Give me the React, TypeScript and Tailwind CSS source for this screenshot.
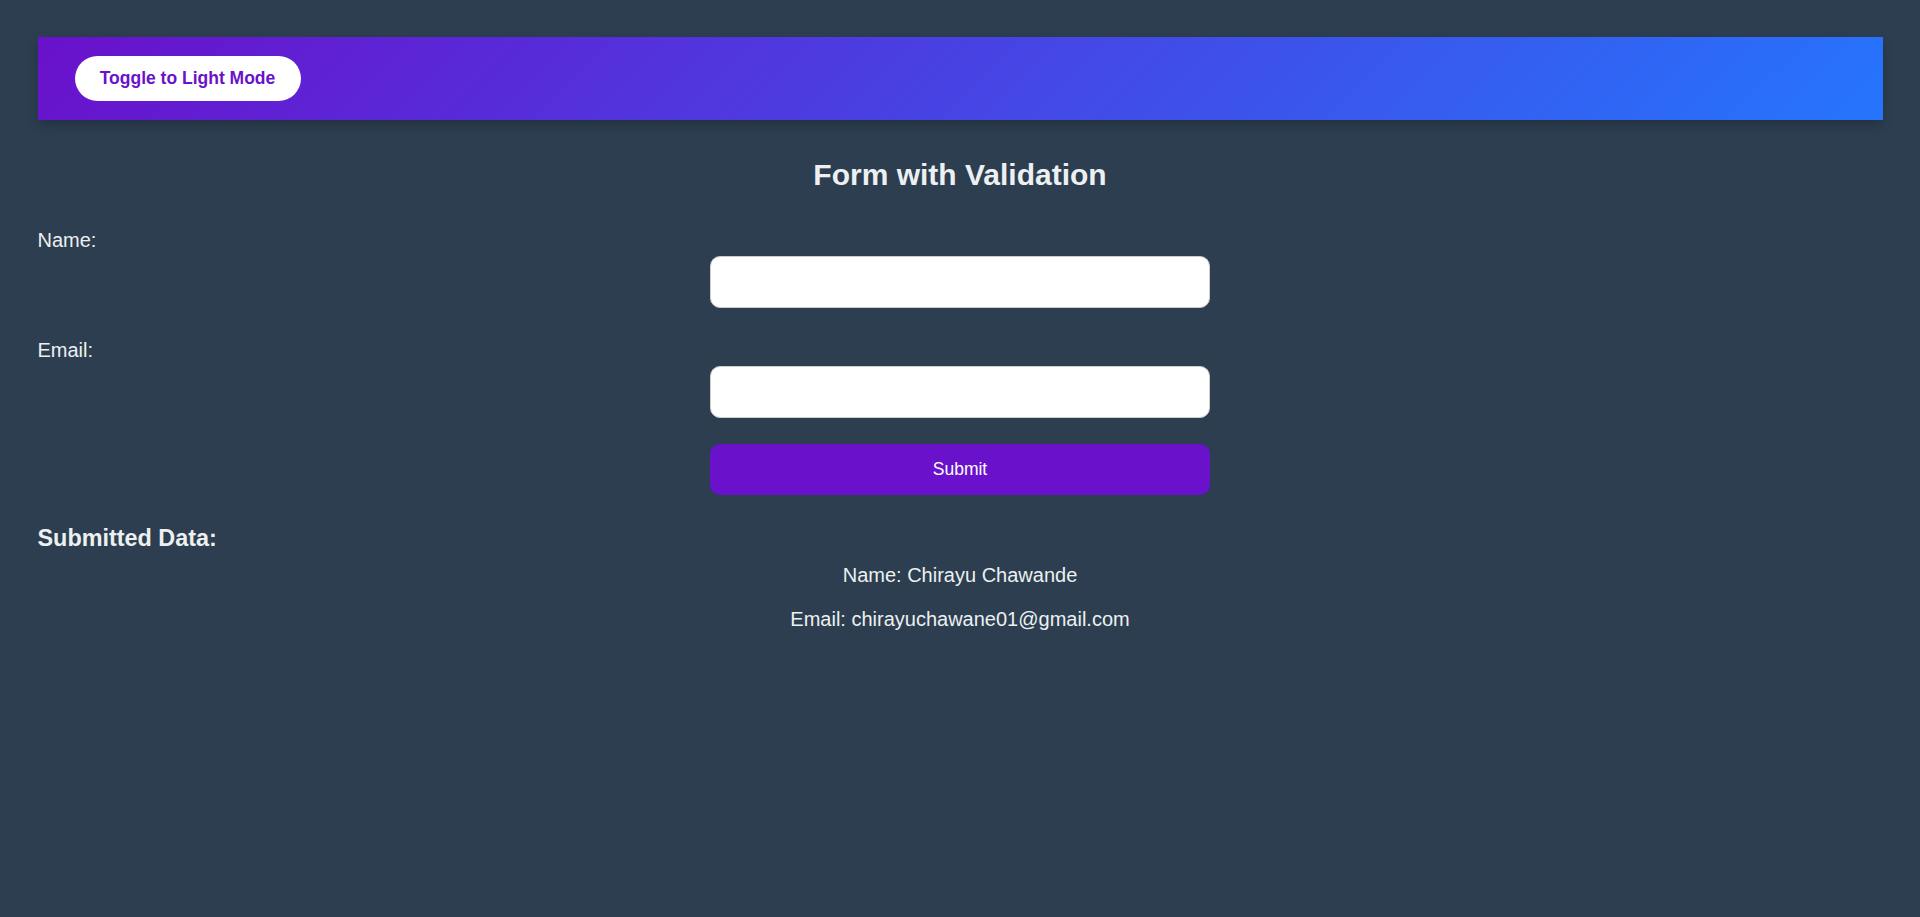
import { useState } from 'react';

type Submitted = { name: string; email: string };

export default function App() {
  const [name, setName] = useState('');
  const [email, setEmail] = useState('');
  const [data, setData] = useState<Submitted | null>({
    name: 'Chirayu Chawande',
    email: 'chirayuchawane01@gmail.com',
  });

  const onSubmit = (e: React.FormEvent) => {
    e.preventDefault();
    if (!name.trim() || !email.trim()) return;
    setData({ name, email });
    setName('');
    setEmail('');
  };

  return (
    <div className="min-h-screen bg-[#2c3e50] px-[37.5px] pt-[37px] font-['Liberation_Sans',Arial,sans-serif] text-[#ecf0f1]">
      <header className="flex h-[83px] items-center bg-[linear-gradient(135deg,#6a11cb,#2575fc)] pl-[37px] shadow-[0_5px_10px_rgba(0,0,0,0.2)]">
        <button className="h-[45px] w-[226px] rounded-full bg-white text-[17.5px] font-bold leading-none text-[#6a11cb]">
          Toggle to Light Mode
        </button>
      </header>

      <h2 className="mt-[36.5px] text-center text-[30px] font-bold leading-[36px]">Form with Validation</h2>

      <form onSubmit={onSubmit} className="mt-[35.5px]">
        <label className="block text-[20px] leading-[24px]">Name:</label>
        <input
          type="text"
          value={name}
          onChange={(e) => setName(e.target.value)}
          className="mx-auto mt-[4px] block h-[52px] w-[500px] rounded-[10px] border border-[#ccc] bg-white px-[12px] text-[20px] text-black outline-none"
        />
        <label className="mt-[30px] block text-[20px] leading-[24px]">Email:</label>
        <input
          type="email"
          value={email}
          onChange={(e) => setEmail(e.target.value)}
          className="mx-auto mt-[4px] block h-[52px] w-[500px] rounded-[10px] border border-[#ccc] bg-white px-[12px] text-[20px] text-black outline-none"
        />
        <button
          type="submit"
          className="mx-auto mt-[26px] block h-[51px] w-[500px] rounded-[10px] bg-[#6a11cb] text-[17.5px] leading-none text-white"
        >
          Submit
        </button>
      </form>

      {data && (
        <div className="mt-[29px]">
          <h3 className="text-[23.4px] font-bold leading-[28px]">Submitted Data:</h3>
          <p className="mt-[11px] text-center text-[20px] leading-[24px]">Name: {data.name}</p>
          <p className="mt-[20px] text-center text-[20px] leading-[24px]">Email: {data.email}</p>
        </div>
      )}
    </div>
  );
}
